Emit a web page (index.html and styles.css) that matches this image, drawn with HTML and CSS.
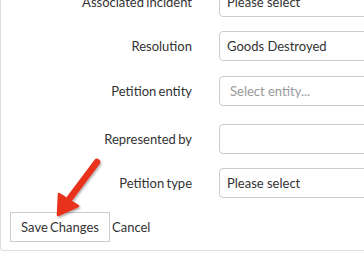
FILE: index.html
```html
<!DOCTYPE html>
<html lang="en">
<head>
  <meta charset="UTF-8">
  <meta name="viewport" content="width=device-width, initial-scale=1.0">
  <title>Edit Petition</title>
  <link rel="stylesheet" href="styles.css">
</head>
<body>
  <div class="panel">
    <form class="petition-form">
      <div class="form-group">
        <label for="incident">Associated incident</label>
        <div class="field">Please select</div>
      </div>
      <div class="form-group">
        <label for="resolution">Resolution</label>
        <div class="field">Goods Destroyed</div>
      </div>
      <div class="form-group entity-row">
        <label for="entity">Petition entity</label>
        <div class="field placeholder">Select entity...</div>
      </div>
      <div class="form-group represented-row">
        <label for="represented">Represented by</label>
        <div class="field"></div>
      </div>
      <div class="form-group">
        <label for="type">Petition type</label>
        <div class="field">Please select</div>
      </div>
      <div class="actions">
        <button type="button" class="btn">Save Changes</button>
        <a class="cancel">Cancel</a>
      </div>
    </form>

    <!-- callout arrow pointing at the save button -->
    <svg class="arrow" width="70" height="90" viewBox="0 0 70 90">
      <defs>
        <filter id="shadow" x="-30%" y="-30%" width="160%" height="160%">
          <feDropShadow dx="1" dy="1.5" stdDeviation="1.2" flood-color="#000" flood-opacity="0.35"/>
        </filter>
      </defs>
      <g filter="url(#shadow)">
        <path d="M56 25 L29 61" stroke="#e8321c" stroke-width="6.5" stroke-linecap="round" fill="none"/>
        <path d="M17 78 L18 57 L37 69 Z" fill="#e8321c" stroke="#e8321c" stroke-width="2.5" stroke-linejoin="round"/>
      </g>
    </svg>
  </div>
</body>
</html>
```

FILE: styles.css
```css
body {
  font-family: Lato, "Open Sans", sans-serif;
  font-size: 13px;
  color: #333;
  margin: 0;
  background: #fff;
  overflow: hidden;
}

.panel {
  position: relative;
  margin-top: -13px;
  width: 420px;
  border: 1px solid #ddd;
  border-top: none;
  border-right: none;
  border-radius: 0 0 0 4px;
  padding: 0 0 8px 9px;
}

.petition-form {
  display: flex;
  flex-direction: column;
}

.form-group {
  display: flex;
  align-items: center;
  margin-bottom: 14px;
}

.entity-row {
  margin-top: 1px;
}

.represented-row {
  margin-top: 4px;
}

label {
  width: 182px;
  text-align: right;
  padding-right: 27px;
  word-spacing: -1px;
}

.field {
  box-sizing: border-box;
  width: 200px;
  height: 30px;
  line-height: 28px;
  padding: 0 7px;
  border: 1px solid #ccc;
  border-radius: 4px;
  background: #fff;
  color: #333;
}

.placeholder {
  padding-left: 10px;
  color: #999;
}

.actions {
  display: flex;
  align-items: center;
}

.btn {
  box-sizing: border-box;
  width: 100px;
  height: 30px;
  font-family: inherit;
  font-size: 13px;
  word-spacing: -1px;
  color: #333;
  background: #fff;
  border: 1px solid #ccc;
  border-radius: 0;
  padding: 0;
  margin-right: 2px;
}

.cancel {
  color: #333;
  cursor: pointer;
}

.arrow {
  position: absolute;
  left: 40px;
  top: 150px;
}
```
